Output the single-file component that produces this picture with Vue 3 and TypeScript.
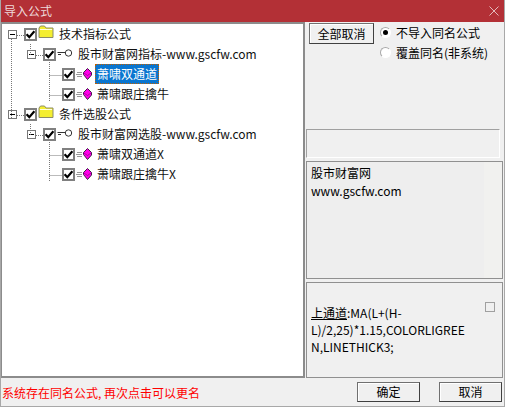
<script setup lang="ts">
interface Row { level: number; icon: 'folder' | 'key' | 'gem'; text: string; selected?: boolean; expander: boolean }
const rows: Row[] = [
  { level: 0, icon: 'folder', text: '技术指标公式', expander: true },
  { level: 1, icon: 'key', text: '股市财富网指标-www.gscfw.com', expander: true },
  { level: 2, icon: 'gem', text: '萧啸双通道', selected: true, expander: false },
  { level: 2, icon: 'gem', text: '萧啸跟庄擒牛', expander: false },
  { level: 0, icon: 'folder', text: '条件选股公式', expander: true },
  { level: 1, icon: 'key', text: '股市财富网选股-www.gscfw.com', expander: true },
  { level: 2, icon: 'gem', text: '萧啸双通道X', expander: false },
  { level: 2, icon: 'gem', text: '萧啸跟庄擒牛X', expander: false },
]
</script>

<template>
  <div class="dialog">
    <header class="titlebar">
      <span class="title">导入公式</span>
      <svg class="close" width="10" height="10" viewBox="0 0 10 10"><path d="M0.5 0.5L9.5 9.5M9.5 0.5L0.5 9.5" stroke="#e9c9cb" stroke-width="0.9" fill="none" /></svg>
    </header>
    <main class="content">
      <section class="tree">
        <svg class="lines" width="100" height="170" viewBox="0 0 100 170">
          <g stroke="#777" stroke-width="1" stroke-dasharray="1 1" fill="none">
            <path d="M11.5 15V95M17 11.5H24M30.5 20V32M36 31.5H43M49.5 38V77M49.5 51.5H62M49.5 71.5H62" />
            <path d="M17 91.5H24M30.5 100V112M36 111.5H43M49.5 118V157M49.5 131.5H62M49.5 151.5H62" />
          </g>
        </svg>
        <div v-for="row in rows" :key="row.text" class="row" :class="'level' + row.level">
          <span class="exp-slot"><span v-if="row.expander" class="expander"></span></span>
          <span class="check">
            <svg width="9" height="9" viewBox="0 0 9 9"><path d="M0.6 4.2L3.3 7.2L8.4 1.2" stroke="#000" stroke-width="2.2" fill="none" /></svg>
          </span>
          <svg v-if="row.icon === 'folder'" class="icon folder" width="16" height="13" viewBox="0 0 16 13">
            <path d="M1 3V12.5H15V3H8L6.5 1H2.5Z" fill="#f4ee30" stroke="#8c8c66" stroke-width="1" />
            <path d="M2 4H14V5H2Z" fill="#fffde0" />
          </svg>
          <svg v-else-if="row.icon === 'key'" class="icon key" width="16" height="8" viewBox="0 0 16 8">
            <circle cx="11.5" cy="4" r="3.2" fill="#fff" stroke="#333" stroke-width="1" />
            <path d="M0.5 3.5H8M1 5.5H4" stroke="#333" stroke-width="1" fill="none" />
          </svg>
          <svg v-else class="icon gem" width="16" height="12" viewBox="0 0 16 12">
            <path d="M1 4.5H6M0 6.5H6M1 8.5H6" stroke="#999" stroke-width="1" fill="none" />
            <path d="M11.5 0.5L15.5 4.5V7L11.5 11.5L7.5 6.5V4.5Z" fill="#ff00e8" stroke="#40204a" stroke-width="1" />
            <path d="M8 5L11.5 7.5L15 5" stroke="#8a0080" stroke-width="0.7" fill="none" />
          </svg>
          <span class="label" :class="{ selected: row.selected }">{{ row.text }}</span>
        </div>
      </section>
      <aside class="side">
        <div class="options">
          <button class="btn cancel-all" type="button">全部取消</button>
          <div class="radios">
            <label class="radio"><span class="dot on"></span>不导入同名公式</label>
            <label class="radio"><span class="dot"></span>覆盖同名(非系统)</label>
          </div>
        </div>
        <div class="empty-box"></div>
        <div class="info">股市财富网<br />www.gscfw.com</div>
        <div class="code">
          <div class="code-text"><u>上通道</u>:MA(L+(H-L)/2,25)*1.15,COLORLIGREEN,LINETHICK3;</div>
          <span class="small-box"></span>
        </div>
      </aside>
    </main>
    <footer class="footer">
      <span class="status">系统存在同名公式, 再次点击可以更名</span>
      <div class="actions">
        <button class="btn action" type="button">确定</button>
        <button class="btn action" type="button">取消</button>
      </div>
    </footer>
  </div>
</template>

<style scoped>
.dialog {
  width: 505px;
  height: 407px;
  box-sizing: border-box;
  background: #f0f0f0;
  border: 1px solid #a8a8a8;
  border-top: none;
  display: flex;
  flex-direction: column;
  font-family: "Noto Sans CJK SC", "Liberation Sans", sans-serif;
  font-size: 12px;
  color: #000;
  overflow: hidden;
}
.titlebar {
  height: 22px;
  margin: 0 -1px;
  flex: none;
  background: #b33036;
  color: #eed9da;
  display: flex;
  align-items: center;
  justify-content: space-between;
  padding: 0 6px 0 4px;
}
.title { font-size: 12px; line-height: 16px; }
.content {
  flex: none;
  height: 356px;
  display: flex;
  gap: 1px;
}
.tree {
  width: 304px;
  box-sizing: border-box;
  background: #fff;
  border: 2px solid #8c8c8c;
  border-left-width: 1px;
  position: relative;
}
.lines { position: absolute; left: -2px; top: 0; }
.row {
  height: 20px;
  display: flex;
  align-items: center;
}
.level0 { padding-left: 6px; }
.level1 { padding-left: 25px; }
.level2 { padding-left: 44px; }
.exp-slot { width: 16px; height: 9px; flex: none; display: flex; }
.expander {
  width: 9px;
  height: 9px;
  box-sizing: border-box;
  border: 1px solid #777;
  background: linear-gradient(#000, #000) center / 5px 1px no-repeat #fff;
}
.check {
  width: 13px;
  height: 13px;
  box-sizing: border-box;
  border: 2px solid #808080;
  background: #fff;
  flex: none;
  display: flex;
  align-items: center;
  justify-content: center;
}
.icon { flex: none; margin-left: 1px; }
.folder { margin-top: -5px; }
.key { margin-top: -3px; }
.label {
  margin-left: 4px;
  font-size: 12px;
  line-height: 20px;
  padding: 0 1px;
  white-space: nowrap;
  color: #111;
}
.level2 .label { margin-left: 3px; padding: 0 2px 0 2px; }
.selected {
  background: #0a76d0;
  color: #fff !important;
  outline: 1px dotted #c06000;
  outline-offset: -1px;
}
.side {
  flex: 1;
  display: flex;
  flex-direction: column;
  min-width: 0;
  padding-right: 1px;
}
.options {
  height: 107px;
  box-sizing: border-box;
  padding-top: 1px;
  display: flex;
  gap: 6px;
  margin-left: 3px;
}
.btn {
  font-family: inherit;
  font-size: 12px;
  background: #f0f0f0;
  color: #000;
  border: 1px solid #707070;
  border-right-color: #404040;
  border-bottom-color: #404040;
  padding: 0;
  box-shadow: inset 1px 1px 0 #fff;
}
.cancel-all { width: 65px; height: 21px; line-height: 16px; }
.radios { display: flex; flex-direction: column; margin-top: -1px; }
.radio {
  display: flex;
  align-items: center;
  height: 20px;
  gap: 5px;
  font-size: 12px;
  white-space: nowrap;
}
.dot {
  width: 11px;
  height: 11px;
  border-radius: 50%;
  background: #fff;
  box-sizing: border-box;
  border: 1px solid #fff;
  border-top-color: #a8a8a8;
  border-left-color: #a8a8a8;
  display: flex;
  align-items: center;
  justify-content: center;
}
.dot.on::after {
  content: "";
  width: 5px;
  height: 5px;
  border-radius: 50%;
  background: #000;
}
.empty-box {
  height: 29px;
  width: 194px;
  box-sizing: border-box;
  border: 1px solid #a0a0a0;
  border-bottom-color: #fff;
  border-right-color: #fff;
}
.info {
  margin-top: 3px;
  height: 118px;
  box-sizing: border-box;
  border: 1px solid #909090;
  padding: 2px 4px;
  line-height: 18px;
  font-size: 12px;
  background: linear-gradient(90deg, #eeeeee 177px, #f1f1ef 177px);
}
.code {
  margin-top: 3px;
  flex: 1;
  box-sizing: border-box;
  border: 1px solid #909090;
  position: relative;
  padding: 21px 22px 0 4px;
}
.code-text {
  font-size: 12px;
  line-height: 17px;
  overflow-wrap: anywhere;
  width: 160px;
}
.small-box {
  position: absolute;
  right: 7px;
  top: 19px;
  width: 8px;
  height: 8px;
  border: 1px solid #a0a0a0;
  background: #f0f0f0;
}
.footer {
  flex: 1;
  display: flex;
  align-items: center;
  justify-content: space-between;
  padding-right: 2px;
}
.status {
  color: #ff0000;
  font-family: "Noto Sans CJK SC", sans-serif;
  font-size: 12px;
  margin-left: 1px;
}
.actions { display: flex; gap: 19px; }
.action { width: 63px; height: 20px; line-height: 16px; }
</style>
<style>
html, body { margin: 0; background: #f0f0f0; }
</style>
